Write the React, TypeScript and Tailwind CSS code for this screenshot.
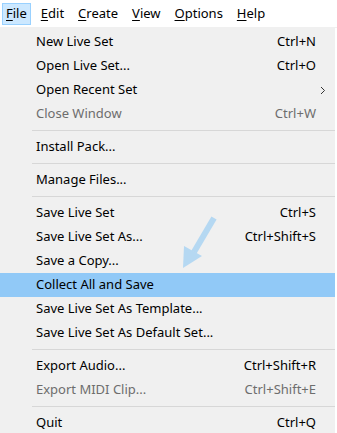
import * as React from 'react';

type Item =
  | { kind: 'sep' }
  | { kind: 'item'; label: string; shortcut?: string; disabled?: boolean; submenu?: boolean; active?: boolean };

const menuBar = [
  { key: 'F', rest: 'ile', active: true },
  { key: 'E', rest: 'dit' },
  { key: 'C', rest: 'reate' },
  { key: 'V', rest: 'iew' },
  { key: 'O', rest: 'ptions' },
  { key: 'H', rest: 'elp' },
];

const items: Item[] = [
  { kind: 'item', label: 'New Live Set', shortcut: 'Ctrl+N' },
  { kind: 'item', label: 'Open Live Set...', shortcut: 'Ctrl+O' },
  { kind: 'item', label: 'Open Recent Set', submenu: true },
  { kind: 'item', label: 'Close Window', shortcut: 'Ctrl+W', disabled: true },
  { kind: 'sep' },
  { kind: 'item', label: 'Install Pack...' },
  { kind: 'sep' },
  { kind: 'item', label: 'Manage Files...' },
  { kind: 'sep' },
  { kind: 'item', label: 'Save Live Set', shortcut: 'Ctrl+S' },
  { kind: 'item', label: 'Save Live Set As...', shortcut: 'Ctrl+Shift+S' },
  { kind: 'item', label: 'Save a Copy...' },
  { kind: 'item', label: 'Collect All and Save', active: true },
  { kind: 'item', label: 'Save Live Set As Template...' },
  { kind: 'item', label: 'Save Live Set As Default Set...' },
  { kind: 'sep' },
  { kind: 'item', label: 'Export Audio...', shortcut: 'Ctrl+Shift+R' },
  { kind: 'item', label: 'Export MIDI Clip...', shortcut: 'Ctrl+Shift+E', disabled: true },
  { kind: 'sep' },
  { kind: 'item', label: 'Quit', shortcut: 'Ctrl+Q' },
];

const App: React.FC = () => {
  return (
    <div
      className="relative w-[337px] h-[433px] overflow-hidden bg-white text-[13px] text-black"
      style={{ fontFamily: '"Noto Sans", "Open Sans", sans-serif' }}
    >
      {/* Menu bar */}
      <div className="h-[28px] flex items-center pl-[2px] gap-[6px] border-b border-[#f0f0f0]">
        {menuBar.map((m) => (
          <div
            key={m.key}
            className={`h-[22px] flex items-center px-[3px] border ${
              m.active ? 'bg-[#cce8ff] border-[#99d1ff]' : 'border-transparent'
            }`}
          >
            <span className="underline underline-offset-2">{m.key}</span>
            <span>{m.rest}</span>
          </div>
        ))}
      </div>

      {/* File menu */}
      <div className="bg-[#f0f0f0] w-[335px] pt-[2px] pb-[4px]">
        {items.map((it, i) =>
          it.kind === 'sep' ? (
            <div key={i} className="h-[9px] flex items-center pl-[32px]">
              <div className="h-px w-full bg-[#d7d7d7]" />
            </div>
          ) : (
            <div
              key={i}
              className={`h-[24px] flex items-center pl-[36px] pr-[19px] ${
                it.active ? 'bg-[#91c9f7]' : ''
              } ${it.disabled ? 'text-[#6d6d6d]' : 'text-black'}`}
            >
              <span className="flex-1">{it.label}</span>
              {it.shortcut && <span>{it.shortcut}</span>}
              {it.submenu && (
                <svg width="6" height="9" viewBox="0 0 6 9" className="mr-[-10px]">
                  <path d="M1 1 L4.5 4.5 L1 8" fill="none" stroke="#333" strokeWidth="1" />
                </svg>
              )}
            </div>
          )
        )}
      </div>

      {/* Annotation arrow */}
      <svg className="absolute left-[178px] top-[212px]" width="44" height="62" viewBox="0 0 44 62">
        <line x1="36" y1="6" x2="16" y2="40" stroke="#b5d8f2" strokeWidth="6" strokeLinecap="butt" />
        <polygon points="5,56 6,34 24,44" fill="#b5d8f2" />
      </svg>
    </div>
  );
};

export default App;
